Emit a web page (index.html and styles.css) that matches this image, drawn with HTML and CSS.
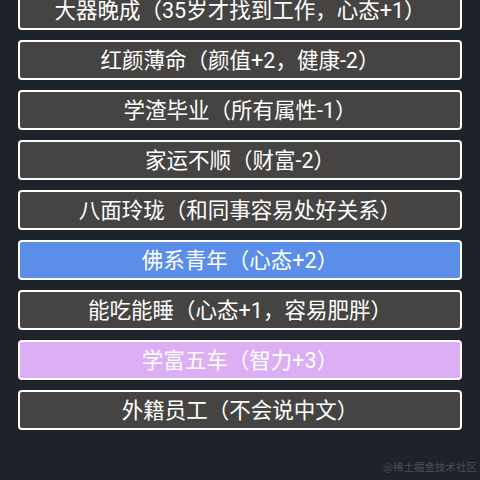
FILE: index.html
```html
<!DOCTYPE html>
<html lang="zh-CN">
<head>
<meta charset="utf-8">
<link rel="stylesheet" href="styles.css">
</head>
<body>
<div class="screen">
  <ul class="list">
    <li class="item">大器晚成（35岁才找到工作，心态+1）</li>
    <li class="item">红颜薄命（颜值+2，健康-2）</li>
    <li class="item">学渣毕业（所有属性-1）</li>
    <li class="item">家运不顺（财富-2）</li>
    <li class="item">八面玲珑（和同事容易处好关系）</li>
    <li class="item item-blue">佛系青年（心态+2）</li>
    <li class="item">能吃能睡（心态+1，容易肥胖）</li>
    <li class="item item-purple">学富五车（智力+3）</li>
    <li class="item">外籍员工（不会说中文）</li>
  </ul>
  <div class="watermark">@稀土掘金技术社区</div>
</div>
</body>
</html>
```

FILE: styles.css
```css
html, body {
  margin: 0;
  padding: 0;
  background: #1e222a;
}
.screen {
  position: relative;
  width: 480px;
  height: 480px;
  overflow: hidden;
  background: #1e222a;
  font-family: Roboto, "Noto Sans CJK SC", sans-serif;
}
.list {
  list-style: none;
  margin: -10px 0 0 0;
  padding: 0 18px;
  display: flex;
  flex-direction: column;
  gap: 10px;
}
.item {
  box-sizing: border-box;
  height: 40px;
  padding-top: 1px;
  border: 2.5px solid #ffffff;
  border-radius: 4px;
  background: #454442;
  color: #ffffff;
  font-size: 21.5px;
  line-height: 1;
  display: flex;
  align-items: center;
  justify-content: center;
  white-space: nowrap;
}
.item-blue {
  background: #5b8ee8;
}
.item-purple {
  background: #dcaff5;
}
.watermark {
  position: absolute;
  right: 3px;
  bottom: 6px;
  font-family: "Noto Sans CJK SC", sans-serif;
  font-size: 10.5px;
  color: #4c5059;
}
```
